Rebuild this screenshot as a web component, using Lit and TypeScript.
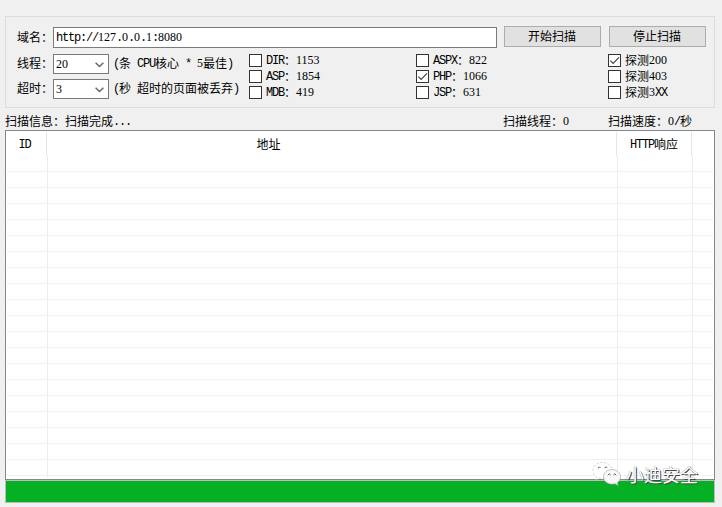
import { LitElement, html, css } from "lit";
import { customElement, property } from "lit/decorators.js";

// Half-width letters and digits keep a fixed 6px advance, CJK characters 12px.
const mixed = (text: string) =>
  text.split(/([0-9]+|[\x20-\x2f\x3a-\x7e]+)/).filter(Boolean).map((run) =>
    /^[0-9]/.test(run)
      ? html`<span class="digits">${run}</span>`
      : /^[\x20-\x7e]/.test(run)
        ? html`<span class="latin">${run}</span>`
        : html`<span>${run}</span>`);

const textStyles = css`
  * { box-sizing: border-box; }
  .latin, .digits { line-height: 1; vertical-align: 1px; white-space: pre; font-size: 12px; }
  .latin { font-family: "Liberation Mono", monospace; letter-spacing: -1.2px; }
  .digits { font-family: "Liberation Serif", serif; }
`;

@customElement("check-item")
class CheckItem extends LitElement {
  @property() label = "";
  @property({ type: Boolean }) checked = false;

  static styles = [textStyles, css`
    :host { display: flex; height: 16px; align-items: flex-start; }
    .box { width: 13px; height: 13px; background: #fff; border: 1px solid #333; flex: none; }
    .box svg { display: block; width: 11px; height: 11px; }
    .text { margin: -1px 0 0 4px; line-height: 13px; white-space: pre; }
  `];

  render() {
    return html`
      <div class="box">${this.checked
        ? html`<svg viewBox="0 0 11 11"><path d="M1.3 5.6 L4.1 8.4 L10 2.4" fill="none" stroke="#444" stroke-width="1.2"/></svg>`
        : ""}</div>
      <div class="text">${mixed(this.label)}</div>`;
  }
}

@customElement("combo-box")
class ComboBox extends LitElement {
  @property() value = "";

  static styles = [textStyles, css`
    :host {
      box-sizing: border-box; display: flex; align-items: center; justify-content: space-between;
      width: 56px; height: 20px; padding: 0 4px 0 2px; flex: none;
      background: #fff; border: 1px solid #7a7a7a;
    }
    .value { line-height: 16px; margin-top: -1px; }
    svg { width: 9px; height: 6px; margin-top: 2px; }
  `];

  render() {
    return html`
      <span class="value">${mixed(this.value)}</span>
      <svg viewBox="0 0 9 6"><path d="M0.6 0.7 L4.5 4.6 L8.4 0.7" fill="none" stroke="#666" stroke-width="1.4"/></svg>`;
  }
}

@customElement("app-root")
class AppRoot extends LitElement {
  static styles = [textStyles, css`
    :host {
      display: block; position: relative; height: 507px; padding: 16px 7px 0 5px;
      box-sizing: border-box; overflow: hidden; background: #f0f0f0; color: #000;
      font: 12px/16px "Noto Sans CJK SC", sans-serif;
    }
    .group { height: 92px; border: 1px solid #dcdcdc; padding: 9px 8px 0 11px; }
    .top { display: flex; height: 22px; }
    .label { width: 36px; flex: none; white-space: nowrap; }
    .top .label { line-height: 22px; }
    .input { width: 444px; height: 21px; margin-top: 1px; padding-left: 2px; line-height: 17px; background: #fff; border: 1px solid #7a7a7a; }
    .button {
      width: 97px; height: 21px; margin-left: 7px; line-height: 18px; text-align: center;
      padding-right: 1px; background: #e1e1e1; border: 1px solid #adadad;
    }
    .button + .button { margin-left: 8px; }
    .options { display: flex; padding-top: 6px; }
    .fields { display: grid; row-gap: 5px; width: 232px; flex: none; align-content: start; }
    .field { display: flex; height: 20px; line-height: 18px; white-space: nowrap; }
    .hint { margin-left: 4px; }
    .checks { display: flex; flex-direction: column; }
    .first { width: 167px; }
    .second { width: 192px; }
    .status { display: flex; height: 22px; line-height: 26px; white-space: nowrap; }
    .message { width: 498px; }
    .threads { width: 105px; }
    .table { height: 350px; padding: 0 1px; background: #fff; border: 1px solid #828790; }
    .head, .row { display: grid; grid-template-columns: 41px 570px 75px 1fr; }
    .head { height: 25px; padding-top: 1px; grid-template-columns: 40px 570px 75px 1fr; text-align: center; line-height: 24px; }
    .head div, .row div { border-right: 1px solid #ededed; }
    .head div { border-color: #e5e5e5; }
    .head .id { padding-right: 4px; }
    .head .address { padding-right: 126px; }
    .head div:last-child, .row div:last-child { border-right: 0; }
    .row { height: 16px; border-bottom: 1px solid #f0f0f0; }
    .row:last-child { height: 2px; border: 0; }
    .progress { height: 23px; border: 1px solid #bcbcbc; background: #06b025; }
    .brand { position: absolute; left: 592px; top: 461px; display: flex; align-items: center; }
    .brand svg { width: 30px; height: 26px; }
    .brand span {
      margin-left: 4px; font-size: 18px; line-height: 26px; color: #fff; white-space: nowrap;
      text-shadow: 1px 1px 0 #444, 0 0 1px #777;
    }
  `];

  render() {
    return html`
      <div class="group">
        <div class="top">
          <div class="label">域名：</div>
          <div class="input">${mixed("http://127.0.0.1:8080")}</div>
          <div class="button">开始扫描</div>
          <div class="button">停止扫描</div>
        </div>
        <div class="options">
          <div class="fields">
            <div class="field">
              <div class="label">线程：</div><combo-box value="20"></combo-box>
              <div class="hint">${mixed("(条 CPU核心 * 5最佳)")}</div>
            </div>
            <div class="field">
              <div class="label">超时：</div><combo-box value="3"></combo-box>
              <div class="hint">${mixed("(秒 超时的页面被丢弃)")}</div>
            </div>
          </div>
          <div class="checks first">
            <check-item label="DIR：1153"></check-item>
            <check-item label="ASP：1854"></check-item>
            <check-item label="MDB：419"></check-item>
          </div>
          <div class="checks second">
            <check-item label="ASPX：822"></check-item>
            <check-item label="PHP：1066" checked></check-item>
            <check-item label="JSP：631"></check-item>
          </div>
          <div class="checks">
            <check-item label="探测200" checked></check-item>
            <check-item label="探测403"></check-item>
            <check-item label="探测3XX"></check-item>
          </div>
        </div>
      </div>
      <div class="status">
        <div class="message">${mixed("扫描信息：扫描完成...")}</div>
        <div class="threads">${mixed("扫描线程：0")}</div>
        <div>${mixed("扫描速度：0/秒")}</div>
      </div>
      <div class="table">
        <div class="head">
          <div class="id">${mixed("ID")}</div><div class="address">地址</div><div>${mixed("HTTP响应")}</div><div></div>
        </div>
        ${Array.from({ length: 21 }, () => html`<div class="row"><div></div><div></div><div></div><div></div></div>`)}
      </div>
      <div class="progress"></div>
      <div class="brand">
        <svg viewBox="0 0 30 26">
          <path d="M10.500 1.500C5 1.500 1 5 1 9.500c0 2.700 1.400 4.800 3.500 6.200L3.600 18.800 7 17.100c1.100.3 2.300.5 3.500.5 5.500 0 9.500-3.600 9.500-8.100s-4-8-9.500-8z" fill="#fff" stroke="#bbb" stroke-width=".7" stroke-dasharray="2 2"/>
          <path d="M6 7.200l1.500-1.200 1 1M12.600 7l1.500-1.200 1 1" fill="none" stroke="#555"/>
          <path d="M20 8.500c-4.900 0-8.500 3.200-8.500 7.300s3.600 7.300 8.500 7.300c1.100 0 2.100-.2 3.100-.4l3 1.700-.8-2.800c2-1.300 3.200-3.400 3.200-5.800 0-4.100-3.700-7.300-8.500-7.300z" fill="#f7f7f7" stroke="#aaa" stroke-width=".7"/>
          <path d="M16 14.200l1.300-1.400 1.300 1.200M21.500 14l1.300-1.200 1.300 1.400" fill="none" stroke="#555"/>
        </svg>
        <span>小迪安全</span>
      </div>`;
  }
}
